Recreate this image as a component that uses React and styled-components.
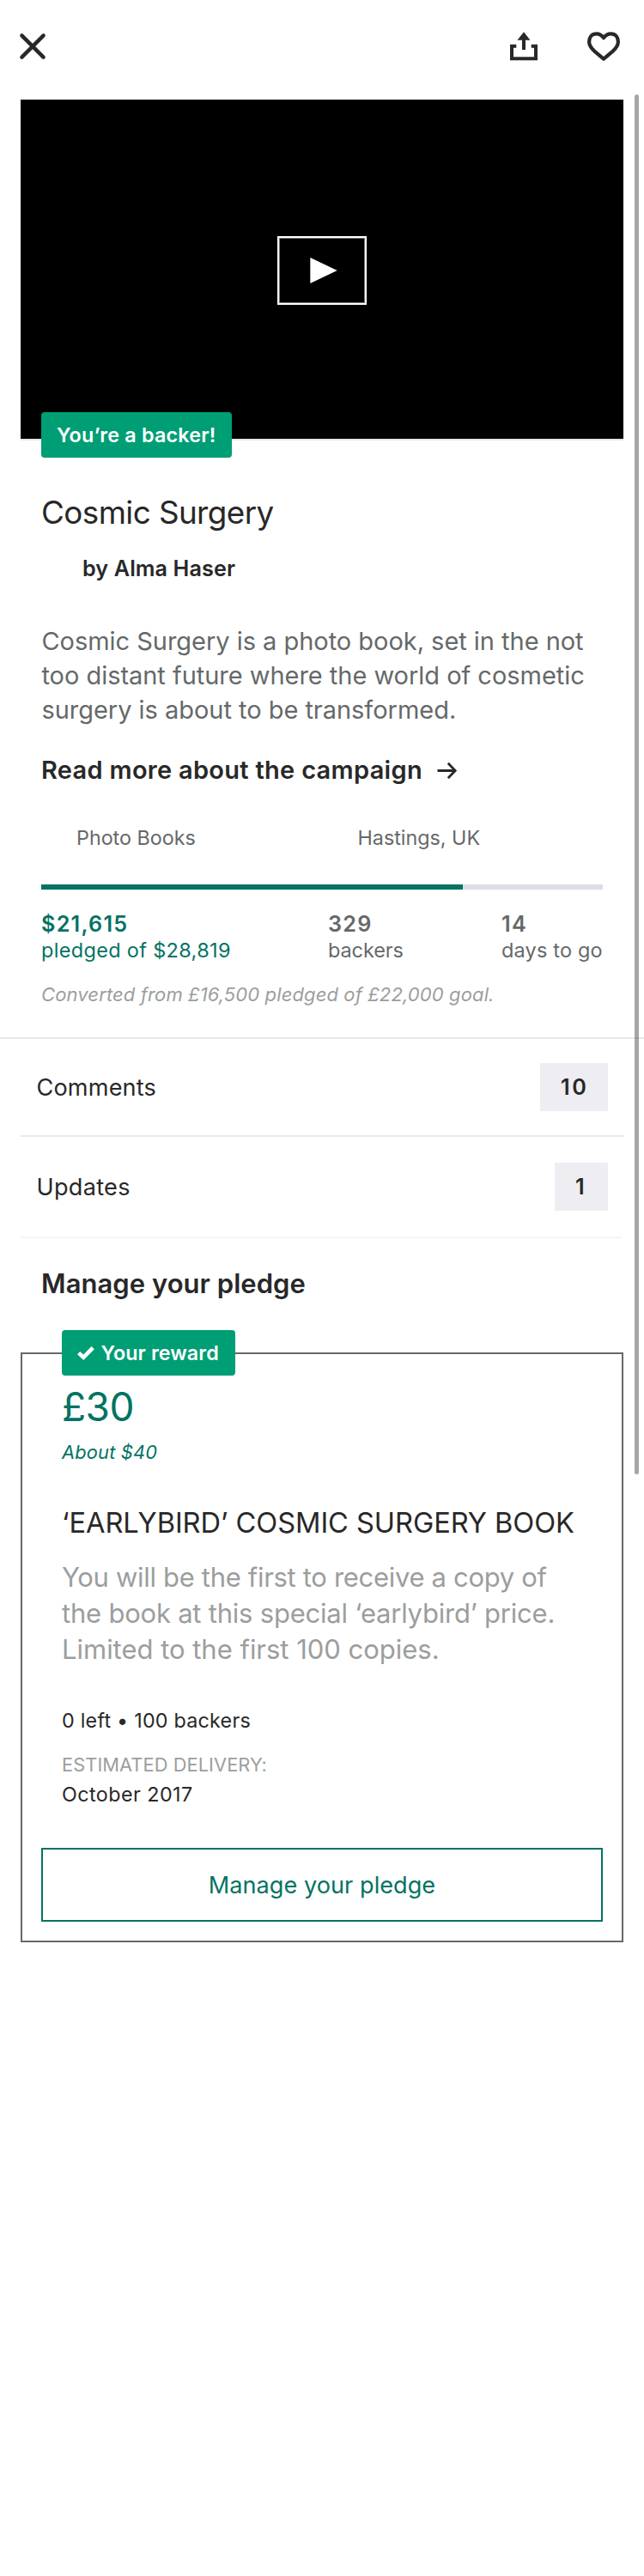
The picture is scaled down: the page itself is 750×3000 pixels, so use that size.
import React from "react";
import styled, { createGlobalStyle } from "styled-components";

const c = {
  ink: "#282828",
  grey: "#656969",
  light: "#9b9e9e",
  green: "#037362",
  badge: "#009e74",
  line: "#e8e8e8",
};

const Global = createGlobalStyle`
  * { box-sizing: border-box; }
  body {
    margin: 0;
    background: #fff;
    color: ${c.ink};
    font-family: Inter, "Liberation Sans", sans-serif;
  }
  button { font-family: inherit; background: none; border: 0; padding: 0; margin: 0; color: inherit; }
  h1, h2, h3, p { margin: 0; font-weight: 400; }
`;

const Screen = styled.main`
  position: relative;
  width: 750px;
  min-height: 3000px;
`;

const ScrollThumb = styled.div`
  position: absolute;
  left: 739px;
  top: 110px;
  width: 5px;
  height: 1607px;
  border-radius: 3px;
  background: rgba(0, 0, 0, 0.35);
`;

const Header = styled.header`
  display: flex;
  align-items: flex-start;
  height: 116px;
  padding: 36px 26px 0 22px;
`;

const IconButton = styled.button`
  display: block;
  height: 36px;
  margin-left: ${(p) => p.$left || "0"};
  svg { display: block; }
`;

const Video = styled.section`
  position: relative;
  display: flex;
  justify-content: center;
  align-items: flex-start;
  height: 397px;
  margin: 0 24px;
  padding-top: 159px;
  background: #000;
  background-clip: padding-box;
  border-bottom: 2px solid #e6e6e6;
`;

const PlayButton = styled.button`
  display: flex;
  align-items: center;
  width: 104px;
  height: 80px;
  padding-left: 36px;
  border: 2px solid #fff;
  outline: 1px solid rgba(255, 255, 255, 0.45);
  outline-offset: -3px;
`;

const Badge = styled.div`
  position: absolute;
  left: ${(p) => p.$x};
  top: ${(p) => p.$y};
  display: flex;
  align-items: center;
  gap: 7.5px;
  width: ${(p) => p.$w};
  height: 53px;
  padding-left: 18px;
  border-radius: 4px;
  background: ${c.badge};
  color: #fff;
  font-size: 23.3px;
  font-weight: 600;
  letter-spacing: ${(p) => p.$ls};
  white-space: nowrap;
`;

const Summary = styled.section`
  padding: 60px 48px 36px;
  border-bottom: 2px solid ${c.line};
`;

const Title = styled.h1`
  font-size: 36.8px;
  line-height: 48px;
  letter-spacing: -0.57px;
`;

const Author = styled.p`
  margin-top: 25px;
  padding-left: 48px;
  font-size: 25.2px;
  line-height: 32px;
  font-weight: 600;
  letter-spacing: 0.1px;
`;

const Blurb = styled.p`
  margin-top: 49px;
  padding-left: 0.4px;
  color: ${c.grey};
  font-size: 29px;
  line-height: 40px;
  letter-spacing: -0.03px;
  white-space: nowrap;
`;

const ReadMore = styled.div`
  display: flex;
  align-items: center;
  gap: 17px;
  margin-top: 30px;
  font-size: 29px;
  line-height: 40px;
  font-weight: 600;
  letter-spacing: 0.29px;
`;

const Meta = styled.div`
  display: grid;
  grid-template-columns: 327.5px 1fr;
  margin-top: 43px;
  padding-left: 41px;
  color: ${c.grey};
  font-size: 23.3px;
  line-height: 32px;
`;

const Progress = styled.div`
  height: 6px;
  margin-top: 38px;
  background: #dcdde6;
`;

const Pledged = styled.div`
  width: 75%;
  height: 100%;
  background: ${c.green};
`;

const Stats = styled.div`
  display: grid;
  grid-template-columns: 334px 202px 1fr;
  margin-top: 25px;
  white-space: nowrap;
`;

const Stat = styled.div`
  color: ${(p) => p.$color || c.grey};
  font-size: 23.5px;
  line-height: 30px;
  letter-spacing: ${(p) => p.$ls};
  strong {
    display: block;
    font-size: 25.2px;
    line-height: 31px;
    font-weight: 600;
    letter-spacing: 1.25px;
  }
`;

const Converted = styled.p`
  margin-top: 22px;
  color: ${c.light};
  font-size: 22px;
  line-height: 28px;
  font-style: italic;
  letter-spacing: 0.12px;
`;

const LinkRow = styled.div`
  display: flex;
  align-items: center;
  justify-content: space-between;
  height: ${(p) => p.$h};
  margin: 0 ${(p) => p.$right || "24px"} 0 24px;
  padding: 0 ${(p) => p.$inset || "18px"} 0 18.5px;
  border-bottom: 2px solid ${(p) => p.$line};
  font-size: 27.1px;
  letter-spacing: ${(p) => p.$ls};
`;

const Count = styled.span`
  display: flex;
  align-items: center;
  width: ${(p) => p.$w};
  height: 56px;
  padding-left: 24px;
  background: #eeedf2;
  font-size: 25.2px;
  font-weight: 600;
  letter-spacing: 2.6px;
`;

const SectionTitle = styled.h2`
  margin-top: 33px;
  padding-left: 48px;
  font-size: 31px;
  line-height: 40px;
  font-weight: 600;
  letter-spacing: 0.04px;
`;

const Card = styled.section`
  position: relative;
  height: 687px;
  margin: 60px 24px 0;
  padding: 33px 22px 22px;
  border: 2px solid ${c.grey};
`;

const RewardBody = styled.div`
  padding-left: 24px;
  white-space: nowrap;
`;

const Amount = styled.p`
  color: ${c.green};
  font-size: 46px;
  line-height: 56px;
  letter-spacing: -0.5px;
`;

const About = styled.p`
  margin-top: 11px;
  color: ${c.green};
  font-size: 21.8px;
  line-height: 28px;
  font-style: italic;
  letter-spacing: 0.2px;
`;

const RewardTitle = styled.h3`
  margin-top: 47px;
  font-size: 32.6px;
  line-height: 42px;
  letter-spacing: -0.05px;
`;

const Description = styled.p`
  margin-top: 22px;
  color: ${c.light};
  font-size: 31px;
  line-height: 42px;
`;

const Line = styled.span`
  display: block;
  letter-spacing: ${(p) => p.$ls};
`;

const Small = styled.p`
  margin-top: ${(p) => p.$top};
  font-size: 23.3px;
  line-height: 30px;
  letter-spacing: ${(p) => p.$ls};
`;

const Label = styled.p`
  margin-top: 22px;
  color: ${c.light};
  font-size: 21.8px;
  line-height: 28px;
  letter-spacing: 0.08px;
`;

const ManageButton = styled.button`
  display: flex;
  align-items: center;
  justify-content: center;
  width: 100%;
  height: 86px;
  margin-top: 47px;
  border: 2px solid ${c.green};
  color: ${c.green};
  font-size: 27.1px;
  letter-spacing: 0.04px;
`;

export default function App() {
  return (
    <Screen>
      <Global />
      <Header>
        <IconButton aria-label="Close">
          <svg width="32" height="36" viewBox="0 0 32 36" fill="none" stroke={c.ink} strokeWidth="4.4" strokeLinecap="round">
            <path d="M3.4 5.4 28.6 30.6M28.6 5.4 3.4 30.6" />
          </svg>
        </IconButton>
        <IconButton aria-label="Share" $left="auto">
          <svg width="36" height="36" viewBox="0 0 36 36" fill="none" stroke={c.ink} strokeWidth="4">
            <path d="M9.3 17.7H4V32.3H32V17.7H26.7" />
            <path d="M18 22V8" />
            <path d="M18 1.3 25.5 10.8H10.5Z" fill={c.ink} stroke="none" />
          </svg>
        </IconButton>
        <IconButton aria-label="Save" $left="54px">
          <svg width="42" height="36" viewBox="0 0 42 36" fill="none" stroke={c.ink} strokeWidth="4.2" strokeLinejoin="round">
            <path d="M21 8.2C18.8 4.9 16 3.4 12.6 3.4C7.4 3.4 4.1 7.3 4.1 12.5C4.1 16.8 6.5 20 10 23.3L21 32.6L32 23.3C35.5 20 37.9 16.8 37.9 12.5C37.9 7.3 34.6 3.4 29.4 3.4C26 3.4 23.2 4.9 21 8.2Z" />
          </svg>
        </IconButton>
      </Header>

      <Video>
        <PlayButton aria-label="Play">
          <svg width="32" height="30" viewBox="0 0 32 30">
            <path d="M0.3 0V30L31.7 15Z" fill="#fff" />
          </svg>
        </PlayButton>
        <Badge $x="24px" $y="364px" $w="222px" $ls="0.22px">You’re a backer!</Badge>
      </Video>

      <Summary>
        <Title>Cosmic Surgery</Title>
        <Author>by Alma Haser</Author>
        <Blurb>
          Cosmic Surgery is a photo book, set in the not<br />
          too distant future where the world of cosmetic<br />
          surgery is about to be transformed.
        </Blurb>
        <ReadMore>
          Read more about the campaign
          <svg width="24" height="20" viewBox="0 0 24 20" fill="none" stroke={c.ink} strokeWidth="2.8">
            <path d="M0.5 10.5H21M12.8 1.8 21.2 10.5 12.8 19.2" />
          </svg>
        </ReadMore>
        <Meta>
          <span>Photo Books</span>
          <span>Hastings, UK</span>
        </Meta>
        <Progress><Pledged /></Progress>
        <Stats>
          <Stat $color={c.green} $ls="0.32px"><strong>$21,615</strong>pledged of $28,819</Stat>
          <Stat $ls="-0.1px"><strong>329</strong>backers</Stat>
          <Stat $ls="0.16px"><strong>14</strong>days to go</Stat>
        </Stats>
        <Converted>Converted from £16,500 pledged of £22,000 goal.</Converted>
      </Summary>

      <LinkRow $h="114px" $line={c.line} $ls="0.16px">
        Comments<Count $w="79px">10</Count>
      </LinkRow>
      <LinkRow $h="118px" $line="#f5f5f5" $right="26px" $inset="16px" $ls="0.28px">
        Updates<Count $w="62px">1</Count>
      </LinkRow>

      <SectionTitle>Manage your pledge</SectionTitle>

      <Card>
        <Badge $x="46px" $y="-28px" $w="202px" $ls="0.1px">
          <svg width="20" height="16" viewBox="0 0 20 16" fill="none" stroke="#fff" strokeWidth="4.6">
            <path d="M1.6 7.6 7.2 12.8 18.2 1.6" />
          </svg>
          Your reward
        </Badge>
        <RewardBody>
          <Amount>£30</Amount>
          <About>About $40</About>
          <RewardTitle>‘EARLYBIRD’ COSMIC SURGERY BOOK</RewardTitle>
          <Description>
            <Line $ls="-0.32px">You will be the first to receive a copy of</Line>
            <Line $ls="-0.22px">the book at this special ‘earlybird’ price.</Line>
            <Line $ls="-0.02px">Limited to the first 100 copies.</Line>
          </Description>
          <Small $top="47px" $ls="0.23px">0 left • 100 backers</Small>
          <Label>ESTIMATED DELIVERY:</Label>
          <Small $top="6px" $ls="0.45px">October 2017</Small>
        </RewardBody>
        <ManageButton>Manage your pledge</ManageButton>
      </Card>
      <ScrollThumb />
    </Screen>
  );
}
